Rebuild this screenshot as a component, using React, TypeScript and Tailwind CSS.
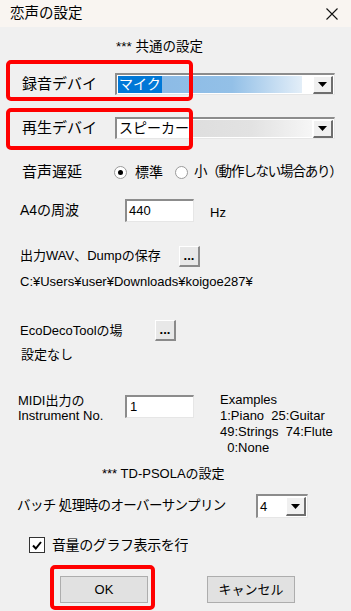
import React from 'react';

const font = { fontFamily: '"Liberation Sans", "Noto Sans CJK JP", sans-serif' };

function Arrow() {
  return (
    <svg width="9" height="5" viewBox="0 0 9 5">
      <polygon points="0,0 9,0 4.5,5" fill="#000" />
    </svg>
  );
}

function DropButton({ className = '' }: { className?: string }) {
  return (
    <div
      className={`flex items-center justify-center bg-[#f0f0f0] border-t border-l border-t-white border-l-white border-b-2 border-r-2 border-b-[#6e6e6e] border-r-[#6e6e6e] ${className}`}
    >
      <Arrow />
    </div>
  );
}

function Sunken({ className = '', children }: { className?: string; children?: React.ReactNode }) {
  return (
    <div
      className={`bg-white border-t-2 border-l-2 border-t-[#8c8c8c] border-l-[#8c8c8c] border-b border-r border-b-[#e6e6e6] border-r-[#e6e6e6] ${className}`}
    >
      {children}
    </div>
  );
}

function DotsButton() {
  return (
    <div className="w-[21px] h-[21px] flex items-end justify-center pb-[3px] bg-[#e8e8e8] border-t border-l border-t-white border-l-white border-b-2 border-r-2 border-b-[#8a8a8a] border-r-[#8a8a8a] text-[13px] leading-none font-bold">
      ...
    </div>
  );
}

function Radio({ checked }: { checked?: boolean }) {
  return (
    <div className="w-[13px] h-[13px] shrink-0 rounded-full bg-white border border-[#9a9a9a] flex items-center justify-center">
      {checked && <div className="w-[5px] h-[5px] rounded-full bg-black" />}
    </div>
  );
}

export default function App() {
  return (
    <div className="relative w-[351px] h-[611px] overflow-hidden bg-[#f0f0f0] text-black" style={font}>
      {/* title bar */}
      <div className="h-[27px] bg-[#f9f5f1] flex items-center justify-between pl-[10px] pr-[13px]">
        <span className="text-[14.5px]">恋声の設定</span>
        <svg width="12" height="12" viewBox="0 0 12 12">
          <path d="M0.5 0.5 L11.5 11.5 M11.5 0.5 L0.5 11.5" stroke="#111" strokeWidth="1.1" />
        </svg>
      </div>

      <div className="mt-[10px] h-[20px] flex items-center pl-[116px] text-[13.5px]">*** 共通の設定</div>

      {/* recording device */}
      <div className="mt-[16px] h-[22px] flex items-center">
        <span className="w-[115px] pl-[22px] text-[15px]">録音デバイ</span>
        <Sunken className="w-[220px] h-[22px] flex items-center pl-[1px] pr-[1px]">
          <span className="bg-[#0078d7] text-white text-[14px] leading-[17px] px-[1px]">マイク</span>
          <div className="w-[140px] h-[17px] bg-gradient-to-r from-[#8cbbe6] via-[#93c0e7] to-[#e3eef8]" />
          <div className="flex-1" />
          <DropButton className="w-[20px] h-[18px]" />
        </Sunken>
      </div>

      {/* playback device */}
      <div className="mt-[22px] h-[22px] flex items-center">
        <span className="w-[115px] pl-[22px] text-[15px]">再生デバイ</span>
        <Sunken className="w-[220px] h-[22px] flex items-center pl-[1px] pr-[1px]">
          <span className="text-[14px] leading-[17px] px-[1px]">スピーカー</span>
          <div className="w-[122px] h-[17px] bg-gradient-to-r from-[#dedede] via-[#e2e2e2] to-[#f6f6f6]" />
          <div className="flex-1" />
          <DropButton className="w-[20px] h-[18px]" />
        </Sunken>
      </div>

      {/* latency */}
      <div className="mt-[23px] h-[20px] flex items-center whitespace-nowrap">
        <span className="w-[114px] shrink-0 pl-[22px] text-[15px]">音声遅延</span>
        <Radio checked />
        <span className="ml-[8px] text-[14px]">標準</span>
        <div className="ml-[12px]">
          <Radio />
        </div>
        <span className="ml-[6px] text-[13.5px] tracking-[-1.2px]">小（動作しない場合あり）</span>
      </div>

      {/* A4 */}
      <div className="mt-[17px] h-[23px] flex items-center">
        <span className="w-[125px] pl-[20px] text-[14px]">A4の周波</span>
        <Sunken className="w-[69px] h-[23px] flex items-center pl-[2px] text-[13px]">440</Sunken>
        <span className="ml-[16px] text-[13px] mt-[4px]">Hz</span>
      </div>

      {/* output dir */}
      <div className="mt-[23px] h-[22px] flex items-center">
        <span className="w-[179px] pl-[20px] text-[13px]">出力WAV、Dumpの保存</span>
        <DotsButton />
      </div>
      <div className="mt-[7px] h-[16px] flex items-center pl-[20px] text-[13px]">
        C:¥Users¥user¥Downloads¥koigoe287¥
      </div>

      {/* EcoDecoTool */}
      <div className="mt-[30px] h-[21px] flex items-center">
        <span className="w-[155px] pl-[20px] text-[13px]">EcoDecoToolの場</span>
        <DotsButton />
      </div>
      <div className="mt-[6px] h-[16px] flex items-center pl-[21px] text-[13px]">設定なし</div>

      {/* MIDI */}
      <div className="mt-[29px] flex items-start">
        <div className="w-[125px] pl-[18px] text-[13px] leading-[15px] pt-[1px]">
          <div>MIDI出力の</div>
          <div>Instrument No.</div>
        </div>
        <Sunken className="mt-[3px] w-[69px] h-[23px] flex items-center pl-[3px] text-[13px]">1</Sunken>
        <div className="ml-[26px] text-[13px] leading-[16px] whitespace-pre">
          <div>Examples</div>
          <div>1:Piano  25:Guitar</div>
          <div>49:Strings  74:Flute</div>
          <div>  0:None</div>
        </div>
      </div>

      <div className="mt-[8px] h-[20px] flex items-center pl-[102px] text-[13px]">*** TD-PSOLAの設定</div>

      {/* oversampling */}
      <div className="mt-[10px] h-[24px] flex items-center">
        <span className="w-[256px] pl-[17px] text-[13.5px] tracking-[-0.6px] whitespace-nowrap overflow-hidden">
          バッチ 処理時のオーバーサンプリン
        </span>
        <Sunken className="w-[52px] h-[24px] flex items-center pl-[2px] pr-[1px]">
          <span className="text-[13px] flex-1">4</span>
          <DropButton className="w-[20px] h-[19px]" />
        </Sunken>
      </div>

      {/* checkbox */}
      <div className="mt-[18px] h-[18px] flex items-center pl-[29px]">
        <div className="w-[16px] h-[16px] bg-white border border-[#333] flex items-center justify-center">
          <svg width="10" height="9" viewBox="0 0 10 9">
            <path d="M1 4.5 L3.8 7.5 L9 1" stroke="#000" strokeWidth="2" fill="none" />
          </svg>
        </div>
        <span className="ml-[7px] w-[136px] overflow-hidden whitespace-nowrap text-[14px] tracking-[-0.4px]">音量のグラフ表示を行う</span>
      </div>

      {/* buttons */}
      <div className="mt-[22px] flex items-center">
        <div className="ml-[60px] w-[88px] h-[27px] flex items-center justify-center bg-[#e1e1e1] border border-[#adadad] text-[13px]">
          OK
        </div>
        <div className="ml-[59px] w-[88px] h-[27px] flex items-center justify-center bg-[#e1e1e1] border border-[#adadad] text-[13px]">
          キャンセル
        </div>
      </div>

      {/* red annotation boxes */}
      <div className="absolute left-[6px] top-[60px] w-[187px] h-[41px] border-[4px] border-[#ff0000] rounded-[5px]" />
      <div className="absolute left-[6px] top-[108px] w-[187px] h-[42px] border-[4px] border-[#ff0000] rounded-[5px]" />
      <div className="absolute left-[50px] top-[565px] w-[105px] h-[45px] border-[4px] border-[#ff0000] rounded-[5px]" />
    </div>
  );
}
